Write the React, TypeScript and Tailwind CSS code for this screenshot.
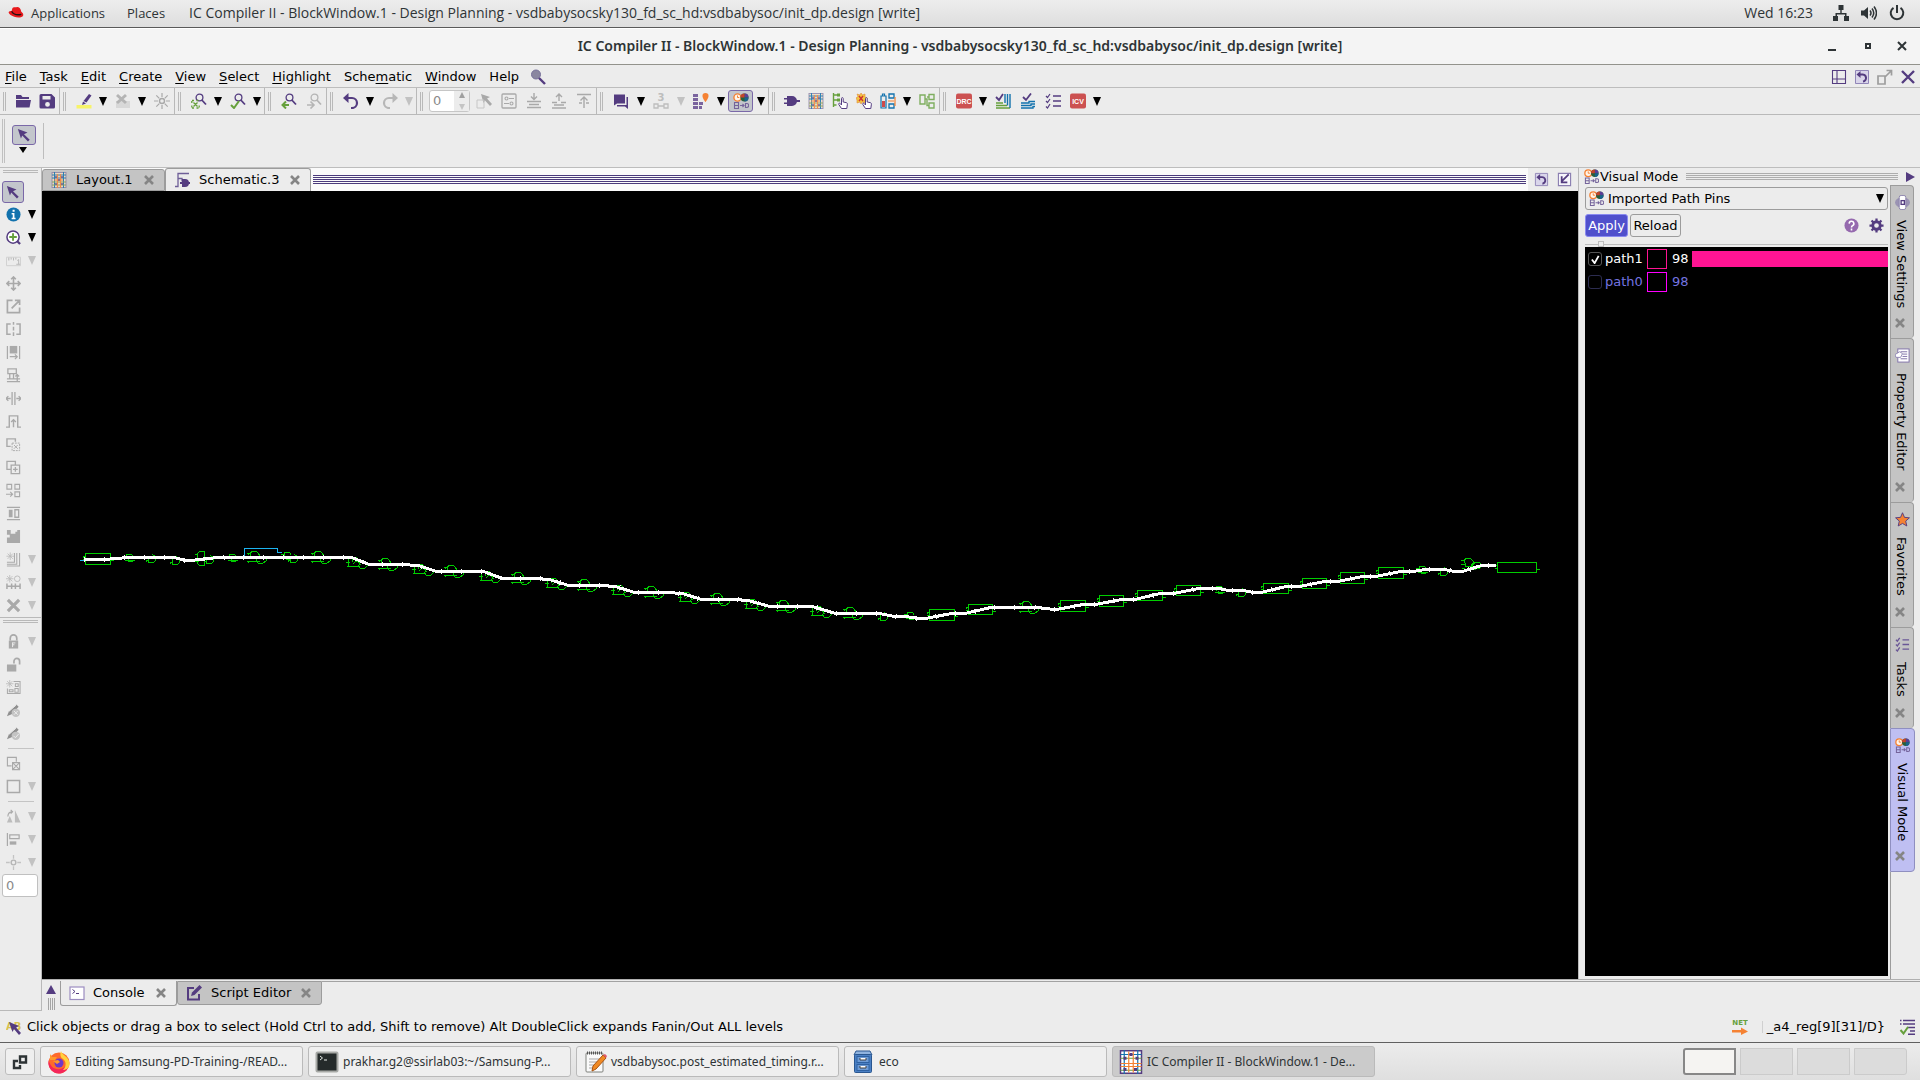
import React from 'react';

const P = '#543c80';
const G = '#a9a9a9';
const GREEN = '#66a03c';
const BLUE = '#1272ad';
const ORANGE = '#f58233';

const st = (color: string, w = 1.5) => ({ fill: 'none', stroke: color, strokeWidth: w });

const gridArt = (
  <g opacity="0.850">
    <rect x="1" y="0.500" width="14" height="15" fill="#f3dcc3" stroke="#8f87a8" />
    <path d="M1 3h14M1 6h14M3.500 0v16M12.500 0v16" {...st(BLUE, 1)} />
    <path d="M1 10h14M1 13h14" {...st('#7d9a50', 1)} />
    <path d="M6.500 2v14M9.500 2v14M3 8h9" {...st(ORANGE, 1.2)} />
    <path d="M4 4h2v2H4zM10 4h2v2h-2zM7 7h2v2H7zM4 11h2v2H4zM10 11h2v2h-2z" fill={P} opacity="0.700" />
  </g>
);

const visualArt = (
  <>
    <circle cx="4.500" cy="4.500" r="3.600" fill="#fff4e8" stroke={ORANGE} strokeWidth="1.400" />
    <path d="M4.500 2.500v2h1.800" {...st(ORANGE, 1)} />
    <circle cx="11.500" cy="4.500" r="4" fill="#27603c" />
    <path d="M11.500 4.500V.5a4 4 0 0 1 4 4z" fill="#5b3e96" />
    <path d="M11.500 4.500h-4a4 4 0 0 1 4-4z" fill="#c5432c" />
    <path d="M11.500 4.500h4a4 4 0 0 1-4 4z" fill="#18628e" />
    <path d="M1.500 9.500h4v6h-4zM1.500 12.500h4M7 12.500h4M9.500 11l1.500 1.500L9.500 14M12.500 10.500h1.200a2 2 0 0 1 0 4h-1.200z" {...st('#75649b', 1.1)} />
  </>
);

const lens = (c: string) => (
  <>
    <circle cx="8.500" cy="4.500" r="3.400" {...st(c, 1.3)} />
    <path d="M10.800 7L15 11.500" {...st(c, 1.8)} />
  </>
);

const spark = (cx: number, cy: number, c: string) => (
  <path
    d={`M${cx - 4} ${cy}h8M${cx} ${cy - 4}v8M${cx - 2.8} ${cy - 2.8}l5.600 5.600M${cx + 2.8} ${cy - 2.8}l-5.600 5.600`}
    {...st(c, 0.9)}
  />
);

const hand = (
  <path
    d="M9.500 15.500L6.800 11.500c-.6-1 .6-1.800 1.400-1L9.500 12V5.500c0-1.200 1.700-1.200 1.700 0V9l3 .6c.9.200 1.300.8 1.200 1.600l-.6 4.300z"
    fill="#fff"
    stroke={P}
  />
);

const ART: Record<string, React.ReactNode> = {
  folder: <path d="M1 2h5l1.500 2H14v2H1zM1 7h15l-1.500 7.500H1z" fill={P} />,
  save: (
    <path fillRule="evenodd" fill={P} d="M2 1h10.500L16 4.500V14a1.500 1.500 0 0 1-1.500 1.500H2A1.500 1.500 0 0 1 .5 14V2.500A1.500 1.500 0 0 1 2 1zM3.500 3v3.500h8V3zM8.500 9a2.400 2.400 0 1 0 0 4.800 2.400 2.400 0 0 0 0-4.800z" />
  ),
  marker: (
    <>
      <path d="M13 1l2.500 1.500-5 7L7.500 8z" fill={P} />
      <path d="M7 8.500l3 2L6 12z" fill={P} />
      <rect x="0.500" y="12" width="15" height="3.500" fill="#f7f36a" />
    </>
  ),
  clear: (
    <>
      <path d="M1 8h14v7H1z" fill="#d8d8d8" />
      <path d="M2 2l9 8M11 2l-9 8" {...st('#b4b4b4', 3)} />
    </>
  ),
  sun: (
    <>
      <circle cx="8" cy="8" r="2.500" {...st(G, 1.4)} />
      <path d="M8 0v4M8 12v4M0 8h4M12 8h4M2.300 2.300l3 3M10.700 10.700l3 3M2.300 13.700l3-3M10.700 5.300l3-3" {...st(G, 1.2)} />
    </>
  ),
  zoomSel: (
    <>
      {lens(P)}
      <path d="M1 7.500h2M5.500 7.500h2M1 15h2M5.500 15h2M.8 8v2M.8 12.500v2M8.200 12.500v2M2.500 9.500l4 4M6.500 9.500l-4 4" {...st(GREEN, 1.3)} />
    </>
  ),
  zoomCheck: (
    <>
      {lens(P)}
      <path d="M1 12l3 3 5-7" {...st(GREEN, 2)} />
    </>
  ),
  zoomBack: (
    <>
      {lens(P)}
      <path d="M8 12H2M5 8.500L1.500 12 5 15.500" {...st(GREEN, 2)} />
    </>
  ),
  zoomFwd: (
    <>
      {lens('#b5b5b5')}
      <path d="M1 12h6M4.500 8.500L8 12l-3.500 3.500" {...st('#b5b5b5', 1.6)} />
    </>
  ),
  undo: (
    <>
      <path d="M4 5h5a5 5 0 0 1 0 10H8" {...st(P, 2.2)} />
      <path d="M5.500 0v10L0 5z" fill={P} />
    </>
  ),
  redo: (
    <>
      <path d="M12 5H7a5 5 0 0 0 0 10h1" {...st('#b7b7b7', 2.2)} />
      <path d="M10.500 0v10L16 5z" fill="#b7b7b7" />
    </>
  ),
  pick: (
    <>
      <path d="M5 1l9 3-3 1.500 5 5.500-2 2-5-5.500L7.500 10z" fill={G} />
      <path d="M1 7h7v8H1z" {...st('#c6c6c6', 1)} />
    </>
  ),
  options: (
    <>
      <rect x="1" y="1" width="14" height="14" rx="1" {...st(G, 1.3)} />
      <circle cx="5.500" cy="5.500" r="1.500" {...st(G, 1.1)} />
      <circle cx="10.500" cy="10.500" r="1.500" {...st(G, 1.1)} />
      <path d="M8 5.500h5M3 10.500h5" {...st(G, 1.2)} />
    </>
  ),
  down: <path d="M8 0v6M5 3.500L8 6.500l3-3M1 8.500h14M3 11.500h10M1 14.500h14" {...st(G, 1.4)} />,
  up: <path d="M8 8V1M5 4L8 1l3 3M1 9.500h5M10 9.500h5M3 12h10M1 15h14" {...st(G, 1.4)} />,
  top: <path d="M8 15V4M4.500 7.500L8 4l3.500 3.500M1 1.500h14M3 10h3M10 10h3" {...st(G, 1.4)} />,
  chat: <path d="M1 1.500h11v9H4L1 12.500zM13.500 4H15v12l-3-2.500H4V12h9.500z" fill={P} />,
  three: (
    <>
      <text x="4.500" y="8" fontSize="10" fontFamily="DejaVu Sans" fontWeight="bold" fill="#bdbdbd">3</text>
      <path d="M1 11h4v4H1zM11 11h4v4h-4zM5 13h6" {...st('#bdbdbd', 1.3)} />
    </>
  ),
  stack: (
    <>
      <path d="M0 1h5v3H0zM0 5h5v3H0zM0 9h5v3H0zM0 13h5v3H0zM6 9h4v3H6zM6 13h3v3H6z" fill="#7a649e" />
      <path d="M12.500 0a3 3 0 0 1 3 3.200c0 2-3 5.800-3 5.800s-3-3.800-3-5.800a3 3 0 0 1 3-3.200z" fill={ORANGE} />
    </>
  ),
  visual: visualArt,
  plug: <path d="M3 3h5a5 5 0 0 1 0 10H3v-2H0V9.500h3v-3H0V5h3zM12 7h4v2h-4z" fill={P} />,
  layout: gridArt,
  handTree: (
    <>
      <path d="M1.500 0v14M1.500 2h4M1.500 7h4M1.500 12h3" {...st(GREEN, 1.4)} />
      <path d="M5 .5h3v3H5zM5 5.500h3v3H5z" fill={GREEN} />
      {hand}
    </>
  ),
  handStar: (
    <>
      <path d="M5 0l1.500 2L9 1v3l2.500 1.500L9 7v3l-2.500-1L5 11 4 9 1 10V7L0 5l2-1.500L1 1l3 1z" fill="#f3c63e" stroke="#e0893c" strokeWidth="0.600" />
      <path d="M3 3l4 5M7 3L3 8" {...st('#cc3333', 1.4)} />
      {hand}
    </>
  ),
  battery: (
    <>
      <path d="M1 3h5v12H1zM2.500 1h2v2h-2z" {...st(BLUE, 1.2)} />
      <path d="M2 8h3v6H2z" fill="#cf4b4b" />
      <path d="M9 1h5v4H9zM9 11h5v4H9z" {...st(BLUE, 1.3)} />
      <path d="M15 4v9M8 8h6" {...st(ORANGE, 1.2)} />
    </>
  ),
  hier: <path d="M1 2h5v9H1zM10 1.500h5v5h-5zM10 10h5v5h-5zM6 6h2v6.500h2M8 4h2" {...st('#7fae60', 1.4)} />,
  drc: (
    <>
      <rect x="0" y="0.500" width="16" height="15" rx="2" fill="#cc5151" />
      <text x="8" y="11" textAnchor="middle" fontSize="7" fontFamily="Liberation Sans" fontWeight="bold" fill="#fff">DRC</text>
    </>
  ),
  icv: (
    <>
      <rect x="0" y="0.500" width="16" height="15" rx="2" fill="#cc5151" />
      <text x="8" y="11" textAnchor="middle" fontSize="7" fontFamily="Liberation Sans" fontWeight="bold" fill="#fff">ICV</text>
    </>
  ),
  verify: (
    <>
      <path d="M1 10h7M1 12.500h11M1 15h14" {...st(GREEN, 1.4)} />
      <path d="M10 1v9M12.500 1v11.500M15 1v14" {...st(BLUE, 1.4)} />
      <path d="M1 4l3 3 4-6" {...st(P, 1.8)} />
    </>
  ),
  verify2: (
    <>
      <path d="M1 10h8V8.500h6M1 12.500h10V11h4M1 15h12v-1.500h2" {...st(BLUE, 1.4)} />
      <path d="M3 4l3 3 5-6.500" {...st(P, 1.8)} />
    </>
  ),
  checks: (
    <>
      <path d="M1 3l1.500 1.500L5 1M1 8l1.500 1.500L5 6M1 13.500L2.500 15 5 11" {...st(P, 1.2)} />
      <path d="M8 3h8M8 8h8M8 13h8" {...st(P, 1.6)} />
    </>
  ),
  arrow: <path d="M1 1l11 4-4 2 6.500 6.500-2 2L6 8.500 4.500 12z" fill={P} />,
  info: (
    <>
      <circle cx="8" cy="8" r="7.500" fill={BLUE} />
      <path d="M7 2.800h2.200V5H7zM6 6.500h3v5h1.200V13H6v-1.500h1.200V8H6z" fill="#fff" />
    </>
  ),
  zoomIn: (
    <>
      <circle cx="7.500" cy="7.500" r="6.500" fill="#fff" stroke={P} strokeWidth="1.600" />
      <path d="M7.500 3.500v8M3.500 7.500h8" {...st(GREEN, 2)} />
      <path d="M12 12l3 3" {...st(P, 2.4)} />
    </>
  ),
  ruler: (
    <>
      <path d="M.5 4.500h15v9H.5z" {...st('#cfcfcf', 1)} />
      <path d="M3 5v3M5.500 5v2M8 5v3M10.500 5v2M12 8l1.500-1v5M11 12h4" {...st('#b5b5b5', 1)} />
    </>
  ),
  move: <path d="M8 1v14M1 8h14M5.500 3.500L8 1l2.500 2.500M5.500 12.500L8 15l2.500-2.500M3.500 5.500L1 8l2.500 2.500M12.500 5.500L15 8l-2.500 2.500" {...st(G, 1.7)} />,
  popout: <path d="M7 1.500H1.500v13h13V9M6 10l8-8M9.500 1.500h5v5" {...st(G, 1.8)} />,
  split: <path d="M5 2H1v11h4M11 2h4v11h-4M8 0v3M8 5v4M8 11v4" {...st(G, 1.6)} />,
  toRight: (
    <>
      <path d="M1.500 1v14M14.500 1v14M4 12.500h8M9.500 10l2.500 2.500L9.500 15" {...st(G, 1.3)} />
      <path d="M4 1h8v8H4z" fill={G} />
    </>
  ),
  wires: <path d="M2 1h9v5H2zM4 6v6M8 6v6M1 11.500h14M1 14.500h14M12 14V7M10 9l2-2 2 2" {...st(G, 1.4)} />,
  spread: <path d="M6.500 1v14M9.500 1v14M0 8h5M11 8h5M2.500 5.500L0 8l2.500 2.500M13.500 5.500L16 8l-2.500 2.500" {...st(G, 1.4)} />,
  pulse: <path d="M0 14h3.500V2h9v12H16M8 14V6M5.500 8.500L8 6l2.500 2.500" {...st(G, 1.5)} />,
  group: (
    <>
      <path d="M5 10H1V2h9v3" {...st(G, 1.5)} />
      <path d="M6.500 6.500h8v8h-8z" {...st(G, 1)} strokeDasharray="2 1" />
      <path d="M8.500 8.500l4 4M12.500 8.500l-4 4" {...st(G, 1)} />
    </>
  ),
  copy: <path d="M5 10H1V1.500h9V5M5.500 5.500h9v9h-9zM10 7.500v5M7.500 10h5" {...st(G, 1.4)} />,
  boxes: <path d="M1 1.500h5v5H1zM9.500 1.500h5v5h-5zM9.500 9.500h5v5h-5zM0 12h7M4.500 9.500L7 12l-2.500 2.500" {...st(G, 1.2)} />,
  align: (
    <>
      <path d="M1 1.500h14M1 14.500h14M9.500 4h4v8h-4z" {...st(G, 1.4)} />
      <path d="M3 4h4v8H3z" fill={G} />
    </>
  ),
  blocks: <path d="M1 1h4v4h5V3h2V1h3v14H1V9h3V6H1z" fill={G} />,
  layers: (
    <>
      {spark(4.5, 4.5, '#bbb')}
      <path d="M1 11h8V1M1 13h10.500V1M1 15h13.500V1" {...st(G, 1.1)} />
    </>
  ),
  rails: (
    <>
      {spark(4, 4, '#bbb')}
      <path d="M1 9v6M6 9v6M10 9v6M15 9v6M1 12h14" {...st(G, 1.6)} />
      <circle cx="12" cy="4" r="3" {...st('#bbb', 1)} />
    </>
  ),
  cross: <path d="M2 2l12 12M14 2L2 14" {...st(G, 3.4)} />,
  lock: (
    <>
      <path d="M4.500 7V4.500a3.500 3.500 0 0 1 7 0V7" {...st(G, 1.8)} />
      <path d="M3 7h10v8.500H3z" fill={G} />
      <path d="M7 9v5M7 9.500h3M7 11.500h2" {...st('#eee', 1)} />
    </>
  ),
  unlock: (
    <>
      <path d="M8.500 7V4.500a3 3 0 0 1 6 0V8" {...st(G, 1.8)} />
      <path d="M1 8h10v7.500H1z" fill={G} />
    </>
  ),
  place: (
    <>
      <path d="M8 1.500h7v13H1.500V9M3.500 10.500h4v2h-4zM9.500 9h3.500v4H9.500zM10 4h3v3h-3z" {...st(G, 1.1)} />
      {spark(4, 4, '#bbb')}
    </>
  ),
  penX: (
    <>
      <path d="M1 14l2-5 8-7.500 2.500 2.500L6 12z" fill="#8f8f8f" />
      <circle cx="10.500" cy="10.500" r="4.500" fill="#c3c3c3" />
      <path d="M8.500 8.500l4 4M12.500 8.500l-4 4M3 9l8-7" {...st('#eee', 1)} />
    </>
  ),
  penCheck: (
    <>
      <path d="M1 14l2-5 8-7.500 2.500 2.500L6 12z" fill="#8f8f8f" />
      <circle cx="10.500" cy="10.500" r="4.500" fill="#c3c3c3" />
      <path d="M8 10.500l2 2 3.500-4M3 9l8-7" {...st('#eee', 1)} />
    </>
  ),
  boxX: <path d="M6 10.500H1.500v-9H11V6M7 7h7.500v7.500H7zM7 7l7.500 7.500M14.500 7L7 14.500" {...st(G, 1.2)} />,
  square: <path d="M1.500 1.500h13v13h-13z" {...st(G, 1.6)} />,
  rotate: (
    <>
      <path d="M9.500 1l6 13.500h-6zM1 14.500l3-7 3 7z" fill="#bcbcbc" />
      <path d="M2 8c0-4 2-5 5-5M5 1l2 2-2 2" {...st(G, 1.2)} />
    </>
  ),
  alignLeft: (
    <>
      <path d="M1.500 1v14M4 3h10v4H4z" {...st(G, 1.3)} />
      <path d="M4 10h7v3.500H4z" fill={G} />
    </>
  ),
  target: (
    <>
      <circle cx="8" cy="8" r="2.500" {...st('#b5b5b5', 1.5)} />
      <path d="M8 0v4M8 12v4M0 8h4M12 8h4" {...st('#c3c3c3', 1.4)} />
    </>
  ),
  search: (
    <>
      <circle cx="6" cy="5.500" r="4.500" fill="#8a86a0" stroke="#77719a" />
      <path d="M9 9l6 6" {...st(P, 2.4)} />
    </>
  ),
  table: <path d="M1.500 1.500h13v13h-13zM1.500 10h13M6 1.500v13" {...st(P, 1.1)} />,
  restore: (
    <>
      <path d="M1.500 1.500h13v13h-13z" fill="#d9d5ea" stroke="#9186b8" />
      <path d="M5 5.500h3a3.500 3.500 0 0 1 1 7" {...st(P, 2)} />
      <path d="M6.500 2v7L2.500 5.500z" fill={P} />
    </>
  ),
  eject: <path d="M1 7h7v8H1zM8 8l6-6M9.500 1.500h5v5" {...st('#9d9d9d', 1.7)} />,
  close: <path d="M2 2l12 12M14 2L2 14" {...st(P, 2.4)} />,
  dockIn: (
    <>
      <path d="M1.500 1.500h13v13h-13z" fill="#f6f5fb" stroke="#8a7eb0" strokeWidth="1.200" />
      <path d="M12.500 2.500l-7 7M5 4.500V11h6" {...st(P, 1.9)} />
    </>
  ),
  schem: (
    <>
      <path d="M1 14.500h3V1.500h11M4 6.500h4v3" {...st('#6f5f98', 1.3)} />
      <path d="M8 7h3a4 4 0 0 1 0 8H8zM6 10h2v2H6zM14 10h2v2h-2z" fill={P} />
    </>
  ),
  console: (
    <>
      <rect x="1" y="2" width="14" height="12.500" fill="#fff" stroke="#9c8dc0" strokeWidth="1.200" />
      <path d="M3.500 4.500l2.500 2-2.500 2M7 8.500h3" {...st(P, 1)} />
    </>
  ),
  edit: (
    <>
      <path d="M8 3H2v11.500h11V9" {...st(P, 2)} />
      <path d="M13.500 0L16 2.500 8.500 10l-3.500 1L6 7.500z" fill={P} />
    </>
  ),
  help: (
    <>
      <circle cx="8" cy="8" r="7.500" fill="#9569ae" />
      <path d="M5.500 6a2.500 2.500 0 1 1 3.500 2.300c-.8.400-1 .8-1 1.700M8 11.300v2" {...st('#fff', 1.7)} />
    </>
  ),
  gear: (
    <>
      <circle cx="8" cy="8" r="4" {...st(P, 3)} />
      <path d="M8 .5v3M8 12.500v3M.5 8h3M12.500 8h3M2.700 2.700l2 2M11.300 11.300l2 2M2.700 13.300l2-2M11.300 4.700l2-2" {...st(P, 2.4)} />
    </>
  ),
  eye: (
    <>
      <ellipse cx="8" cy="8" rx="8" ry="5.500" fill="#9a93b3" />
      <rect x="4.500" y="0.500" width="7" height="15" rx="2" fill="#fff" stroke="#8b82ac" />
      <rect x="6.500" y="6" width="3.500" height="4" fill="#fff" stroke={P} strokeWidth="1.400" />
    </>
  ),
  property: (
    <>
      <rect x="3" y="1" width="12" height="14" fill="#fff" stroke="#7e70a8" />
      <path d="M6 4h7M8 6.500h5M8 9h5M6 11.500h7" {...st('#7e70a8', 1)} />
      <path d="M0 7l5-3 3 2-2 4H1z" fill="#fff" stroke="#8f85b3" />
    </>
  ),
  star: <path d="M8 .8l2.100 4.900 5.300.5-4 3.500 1.200 5.200L8 12.200l-4.600 2.700 1.200-5.200-4-3.500 5.300-.5z" fill={ORANGE} stroke={P} />,
  tasks: (
    <path d="M1 3l1.500 1.500L5 1M1 8l1.500 1.500L5 6M1 13.500L2.500 15 5 11M8 3h7M8 8h7M8 13h7" {...st('#6a5796', 1.4)} />
  ),
  status: (
    <>
      <text x="0" y="11" fontSize="10" fontFamily="DejaVu Sans" fontWeight="bold" fill="#d9c24c">AB</text>
      <path d="M3 3l10 4-3 1.500L15 14l-2 2-5-6-1.500 3z" fill={P} />
    </>
  ),
  net: (
    <>
      <text x="8" y="6" textAnchor="middle" fontSize="7" fontFamily="DejaVu Sans" fontWeight="bold" fill={GREEN}>NET</text>
      <path d="M0 11h9V8.500l7 4-7 3.500v-2.500H0z" fill={ORANGE} />
    </>
  ),
  queue: (
    <>
      <path d="M1 1.500h1.500M4 1.500h12M1 5h1.500M4 5h12M8 8.500h8M11 12h5M9 15.300h7" {...st(P, 1.4)} />
      <path d="M1.500 11l3 3.500L9 8" {...st(GREEN, 2)} />
    </>
  ),
  hat: (
    <>
      <path d="M4.500 3c1-1.500 3-.5 4-.8 2-.5 4 .8 4.800 4.500C15 8 15.500 9 15.200 10.500c-1 2.500-6 2.500-9 1.300C3 10.500.8 9 .6 7.500.6 6.300 2.500 6 3.600 6z" fill="#e8191c" />
      <path d="M3.600 6.300c2 3 6 4 9.700 3" {...st('#241010', 1.3)} />
    </>
  ),
  network: <path d="M5.500 0h5v5H8.700v3h4.800v3H16v5h-5v-5h1V9.500H4V11h1v5H0v-5h2.500V8h4.800V5H5.500z" fill="#2e3436" />,
  volume: (
    <>
      <path d="M0 5.500h3L7 2v12l-4-3.500H0z" fill="#2e3436" />
      <path d="M9 5.500q2 2.500 0 5M11 3.500q3.500 4.500 0 9M13 1.500q5 6.500 0 13" {...st('#2e3436', 1.5)} />
    </>
  ),
  power: <path d="M4.500 2.800a6.300 6.300 0 1 0 7 0M8 0v8" {...st('#2e3436', 2)} />,
};

function Icon({ n, className = 'size-4' }: { n: string; className?: string }) {
  return (
    <svg viewBox="0 0 16 16" className={`shrink-0 ${className}`} aria-hidden="true">
      {ART[n]}
    </svg>
  );
}

function Tri({ dim = false }: { dim?: boolean }) {
  return (
    <svg viewBox="0 0 8 9" className="h-[9px] w-2 shrink-0" aria-hidden="true">
      <path d="M0 0h8L4 9z" fill={dim ? '#c2c2c2' : '#000'} />
    </svg>
  );
}

const Tool = ({ n, narrow = false, on = false }: { n: string; narrow?: boolean; on?: boolean }) => (
  <button
    aria-label={n}
    className={`flex h-[22px] shrink-0 items-center justify-center rounded-[3px] ${narrow ? 'w-6' : 'w-[25px]'} ${on ? 'border border-[#7a68a8] bg-[#c3c6cc]' : ''}`}
  >
    <Icon n={n} />
  </button>
);

const Drop = ({ dim = false, wide = false }: { dim?: boolean; wide?: boolean }) => (
  <button aria-label="More" className={`flex h-[22px] shrink-0 items-center justify-center ${wide ? 'w-[15px]' : 'w-[14px]'}`}>
    <Tri dim={dim} />
  </button>
);

function Group({ children, last = false }: { children: React.ReactNode; last?: boolean }) {
  return (
    <div className={`flex items-center ${last ? '' : 'border-r border-[#b9b9b9]'}`}>
      <span className="mr-[5px] ml-[3px] h-[19px] w-[3px] border-x border-[#b9b9b9]" />
      {children}
    </div>
  );
}

const MENUS: [string, string, string][] = [
  ['', 'F', 'ile'], ['', 'T', 'ask'], ['', 'E', 'dit'], ['', 'C', 'reate'], ['', 'V', 'iew'], ['', 'S', 'elect'],
  ['', 'H', 'ighlight'], ['Sche', 'm', 'atic'], ['', 'W', 'indow'], ['Help', '', ''],
];

type Row = { n: string; drop?: 'on' | 'dim'; on?: boolean };
const SIDE: (Row | 'rule' | 'grip')[] = [
  { n: 'arrow', on: true }, { n: 'info', drop: 'on' }, { n: 'zoomIn', drop: 'on' }, { n: 'ruler', drop: 'dim' },
  { n: 'move' }, { n: 'popout' }, { n: 'split' }, { n: 'toRight' }, { n: 'wires' }, { n: 'spread' }, { n: 'pulse' },
  { n: 'group' }, { n: 'copy' }, { n: 'boxes' }, { n: 'align' }, { n: 'blocks' }, { n: 'layers', drop: 'dim' },
  { n: 'rails', drop: 'dim' }, { n: 'cross', drop: 'dim' }, 'grip', { n: 'lock', drop: 'dim' }, { n: 'unlock' },
  { n: 'place' }, { n: 'penX' }, { n: 'penCheck' }, 'rule', { n: 'boxX' }, { n: 'square', drop: 'dim' }, 'rule',
  { n: 'rotate', drop: 'dim' }, { n: 'alignLeft', drop: 'dim' }, { n: 'target', drop: 'dim' },
];

const TITLE = 'IC Compiler II - BlockWindow.1 - Design Planning - vsdbabysocsky130_fd_sc_hd:vsdbabysoc/init_dp.design [write]';

const ROUTE =
  '84,560 97,559 110,559 135,557 157,557 176,558 184,560 195,560 213,558 237,557 268,557 277,558 298,557 334,557 353,558 368,564 400,564 420,566 435,571 467,571 485,572 501,578 534,578 551,580 567,585 600,585 617,587 633,592 666,592 684,594 700,599 733,599 750,601 768,606 800,606 814,607 834,613 865,613 882,614 892,616 909,617 916,618 928,618 954,613 967,613 993,607 1033,607 1050,609 1059,609 1086,604 1098,604 1124,599 1137,599 1162,593 1176,593 1201,588 1217,588 1226,590 1241,590 1251,592 1263,592 1288,586 1302,586 1327,581 1340,581 1365,576 1378,576 1403,571 1416,571 1428,569 1442,569 1452,571 1464,571 1483,565 1496,565';

const CELLS = [
  [85, 553, 25, 11], [929, 609, 25, 11], [968, 604, 24, 10], [1060, 600, 25, 11], [1099, 595, 24, 11], [1137, 590, 25, 10],
  [1176, 585, 24, 10], [1263, 583, 25, 10], [1302, 578, 24, 10], [1340, 572, 24, 11], [1378, 567, 25, 11], [1497, 562, 39, 10],
];
const TALL = [[248, 557], [312, 557], [379, 564], [445, 571], [512, 578], [578, 585], [645, 592], [711, 599], [777, 606], [844, 613], [1020, 607]];
const LOW = [[346, 560], [412, 567], [479, 574], [545, 581], [611, 588], [678, 595], [744, 602], [810, 609]];
const BUMPS = [[124, 558], [227, 558], [282, 556], [905, 616], [1214, 590], [1417, 570]];
const CUPS = [[148, 557], [172, 559], [206, 558], [290, 557], [880, 615], [1238, 591], [1440, 570]];

function Schematic() {
  return (
    <svg viewBox="42 191 1536 788" className="size-full" shapeRendering="crispEdges" role="img" aria-label="Schematic path">
      <g fill="none" stroke="#00cd00" strokeWidth="1" transform="translate(.5 .5)">
        {CELLS.map(([x, y, w, h]) => (
          <path key={x} d={`M${x} ${y}h${w}v${h}h${-w}zM${x - 3} ${y + 3}h3M${x - 3} ${y + 6}h3M${x - 2} ${y + 2}v2M${x + w} ${y + 7}h3`} />
        ))}
        {TALL.map(([x, y]) => (
          <path key={x} d={`M${x - 2} ${y - 4}h4M${x + 2} ${y}v-5l2-1h4l2 2l2 4M${x - 2} ${y + 4}h13M${x + 8} ${y}v3l2 3h4l4-3v-4M${x} ${y - 5}v2M${x} ${y + 3}v2`} />
        ))}
        {LOW.map(([x, y]) => (
          <path key={x} d={`M${x - 1} ${y + 2}h4M${x} ${y + 6}h13M${x + 2} ${y + 5}v-7l3-1h5l2 3M${x + 6} ${y + 4}l3-3h3l2 4M${x + 12} ${y + 5}l2 3h4l3-3v-3M${x + 6} ${y - 3}v4`} />
        ))}
        {BUMPS.map(([x, y]) => (
          <path key={x} d={`M${x - 2} ${y - 2}h3M${x} ${y + 2}h9M${x + 2} ${y}v-4h5l2 3M${x + 4} ${y}v3h4l3-2`} />
        ))}
        {CUPS.map(([x, y]) => (
          <path key={x} d={`M${x - 3} ${y + 3}h3M${x} ${y - 2}v7h5l2-2v-4l-3-2M${x - 2} ${y + 2}v2`} />
        ))}
        <path d="M197 562v-9l2-2h5v14h-5l-2-2M194 561h4M194 554h3" />
        <path d="M1464 559l2-1h4l3 3v3l-3 2h-5zM1465 566h10l6-2M1464 570h6l3-2M1460 560h4M1460 564h4M1461 568h3M1471 564l4-2h4l3 3-3 3-6 1M80 560h4" />
      </g>
      <path d="M244.500 557v-9h33v4h4M80 560.500h4" fill="none" stroke="#1cb4f0" />
      <polyline points={ROUTE} fill="none" stroke="#fff" strokeWidth="3" />
      <polyline points={ROUTE} fill="none" stroke="#fff" strokeWidth="5" strokeDasharray="1 19" />
    </svg>
  );
}

const X = ({ label }: { label: string }) => (
  <button aria-label={`Close ${label}`} className="flex shrink-0 items-center justify-center">
    <svg viewBox="0 0 10 10" className="size-[10px]" aria-hidden="true">
      <path d="M1 1l8 8M9 1L1 9" stroke="#858585" strokeWidth="2.600" />
    </svg>
  </button>
);

const SIDE_TABS = [
  { n: 'eye', t: 'View Settings', h: 'h-[153px]' },
  { n: 'property', t: 'Property Editor', h: 'h-[164px]' },
  { n: 'star', t: 'Favorites', h: 'h-[125px]' },
  { n: 'tasks', t: 'Tasks', h: 'h-[101px]' },
  { n: 'visual', t: 'Visual Mode', h: 'h-[144px]' },
];

const fox = (
  <svg viewBox="0 0 24 24" className="size-6 shrink-0" aria-hidden="true">
    <circle cx="12" cy="13" r="10.500" fill="#ff6a2b" />
    <path d="M12 23.500A10.500 10.500 0 0 1 1.800 10C3 17 8 20 13 19s7-4 8-7c2 6-3 11.500-9 11.500z" fill="#f5265b" />
    <path d="M14 1c1 4 8 6 8.500 12S18 20 16 20c4-4 3-9 0-11-3-1.500-3-5-2-8z" fill="#ffd23d" />
    <path d="M3 4l2 3h5l-2 3H3z" fill="#ff9a28" />
    <circle cx="12" cy="13" r="4.500" fill="#6f39c9" />
    <path d="M6 11l5-1 2 2-3 2z" fill="#ff9a28" />
  </svg>
);
const term = (
  <svg viewBox="0 0 24 24" className="size-6 shrink-0" aria-hidden="true">
    <rect x="1.500" y="2.500" width="21" height="19" rx="1" fill="#252b2b" stroke="#a7a9a6" strokeWidth="2" />
    <path d="M5 6l2.500 2L5 10M9 10h3" fill="none" stroke="#e8ece8" />
  </svg>
);
const note = (
  <svg viewBox="0 0 24 24" className="size-6 shrink-0" aria-hidden="true">
    <rect x="3" y="3" width="17" height="19" rx="1" fill="#fafafa" stroke="#7f817d" />
    <path d="M4 3h15" stroke="#555" strokeWidth="3" strokeDasharray="1 1" />
    <path d="M6 9h11M6 12h9M6 15h7M6 18h5" stroke="#a7a7a7" />
    <path d="M20 5l3 3-10 11-4 2 1-5z" fill="#f08a24" stroke="#a95412" />
    <path d="M20 5l3 3 1-2-2-2z" fill="#e05a6a" />
  </svg>
);
const cabinet = (
  <svg viewBox="0 0 24 24" className="size-6 shrink-0" aria-hidden="true">
    <path d="M5 1h14l2 4H3z" fill="#8fb3df" stroke="#2a5790" />
    <rect x="3.500" y="4.500" width="17" height="18" rx="1" fill="#4b80c4" stroke="#2a5790" />
    <rect x="6" y="6.500" width="12" height="6" fill="#6d9bd6" stroke="#2f62a2" />
    <rect x="6" y="14.500" width="12" height="6" fill="#6d9bd6" stroke="#2f62a2" />
    <path d="M9 8v2h6V8M9 16v2h6v-2" fill="#fff" stroke="#444" />
  </svg>
);
const chip = (
  <svg viewBox="0 0 16 16" className="size-6 shrink-0" aria-hidden="true">
    <rect x="1" y="0.500" width="14" height="15" fill="#fff" stroke={P} />
    <path d="M1 3h14M3.500 0v16M12.500 0v16" {...st(BLUE, 0.8)} />
    <path d="M1 5.500h14M1 13.500h14" {...st(GREEN, 0.8)} />
    <path d="M6.500 1v14M9.500 1v14M1 9h14M1 11h14" {...st(ORANGE, 0.8)} />
    <path d="M3 4.500h2v2H3zM7 2h2v2H7zM11 4.500h2v2h-2zM3 12h2v2H3zM10 12h2v2h-2z" fill={P} />
  </svg>
);

const TASKS = [
  { i: fox, t: 'Editing Samsung-PD-Training-/READ...', on: false },
  { i: term, t: 'prakhar.g2@ssirlab03:~/Samsung-P...', on: false },
  { i: note, t: 'vsdbabysoc.post_estimated_timing.r...', on: false },
  { i: cabinet, t: 'eco', on: false },
  { i: chip, t: 'IC Compiler II - BlockWindow.1 - De...', on: true },
];

export default function App() {
  return (
    <div className="flex h-screen w-full flex-col overflow-hidden bg-[#ececec] font-['DejaVu_Sans',sans-serif] text-[13px] leading-4 text-black">
      <header className="flex h-7 shrink-0 items-center border-b border-[#5a5a5a] bg-gradient-to-b from-[#ededed] to-[#dedede] px-2 pb-0.5 font-['Open_Sans',sans-serif] text-sm leading-4 text-[#2e3436]">
        <Icon n="hat" />
        <button className="ml-[7px] text-[13px]">Applications</button>
        <button className="ml-[22px] text-[13px]">Places</button>
        <button className="ml-6">{TITLE}</button>
        <span className="ml-auto">Wed 16:23</span>
        <div className="ml-5 flex items-center gap-3 pr-[7px]">
          <Icon n="network" />
          <Icon n="volume" />
          <Icon n="power" />
        </div>
      </header>

      <div className="grid h-[37px] shrink-0 grid-cols-[1fr_auto_1fr] items-center border-t border-b border-t-white border-b-[#93938c] bg-[#f4f4f4] pb-0.5 font-['Noto_Sans',sans-serif] text-sm leading-4 font-semibold text-[#2e3436]">
        <span />
        <h1>{TITLE}</h1>
        <div className="flex items-center justify-end gap-6 pr-[13px]">
          <button aria-label="Minimize" className="flex h-[10px] w-[13px] items-end"><span className="h-0.5 w-2 bg-[#2e3436]" /></button>
          <button aria-label="Maximize" className="mr-0.5 size-[6px] border-2 border-[#2e3436]" />
          <button aria-label="Close window">
            <svg viewBox="0 0 10 10" className="size-[10px]"><path d="M1 1l8 8M9 1L1 9" stroke="#2e3436" strokeWidth="2" /></svg>
          </button>
        </div>
      </div>

      <nav className="flex h-[23px] shrink-0 items-center gap-[13px] border-b border-[#bdbdbd] pt-px pr-1 pl-[5px]">
        {MENUS.map(([a, u, b]) => (
          <button key={a + u + b}>
            {a}
            <span className="underline underline-offset-2">{u}</span>
            {b}
          </button>
        ))}
        <Icon n="search" className="-ml-0.5 size-4" />
        <div className="ml-auto flex items-center gap-[7px]">
          <Icon n="table" /><Icon n="restore" /><Icon n="eject" /><Icon n="close" />
        </div>
      </nav>

      <div className="flex h-[27px] shrink-0 border-b border-[#b9b9b9]">
        <Group><Tool n="folder" narrow /><Tool n="save" narrow /></Group>
        <Group><Tool n="marker" /><Drop /><Tool n="clear" /><Drop /><Tool n="sun" /></Group>
        <Group><Tool n="zoomSel" /><Drop /><Tool n="zoomCheck" /><Drop /></Group>
        <Group><Tool n="zoomBack" /><Tool n="zoomFwd" /></Group>
        <Group><Tool n="undo" /><Drop /><Tool n="redo" /><Drop dim /></Group>
        <Group>
          <div className="mr-px ml-px flex h-[22px] w-[41px] items-center rounded-[3px] border border-[#c6c6c6] bg-white">
            <input aria-label="Level" defaultValue="0" className="w-6 min-w-0 pl-[3px] text-[#8a8a8a] outline-none" />
            <span className="flex h-full flex-1 flex-col items-center justify-center gap-1.5 bg-[#ececec]">
              <svg viewBox="0 0 6 6" className="size-[6px]"><path d="M3 0l3 6H0z" fill="#a0a0a0" /></svg>
              <svg viewBox="0 0 6 6" className="size-[6px]"><path d="M0 0h6L3 6z" fill="#c4c4c4" /></svg>
            </span>
          </div>
          <Tool n="pick" /><Tool n="options" /><Tool n="down" /><Tool n="up" /><Tool n="top" />
        </Group>
        <Group><Tool n="chat" /><Drop wide /><Tool n="three" /><Drop dim wide /><Tool n="stack" /><Drop wide /><Tool n="visual" on /><Drop wide /></Group>
        <Group><Tool n="plug" narrow /><Tool n="layout" narrow /><Tool n="handTree" narrow /><Tool n="handStar" narrow /><Tool n="battery" narrow /><Drop /><Tool n="hier" /></Group>
        <Group last><Tool n="drc" /><Drop /><Tool n="verify" /><Tool n="verify2" /><Tool n="checks" /><Tool n="icv" /><Drop /></Group>
      </div>

      <div className="flex h-[53px] shrink-0 border-b border-[#bdbdbd] pl-[2px]">
        <span className="mt-1 h-[44px] w-[3px] border-x border-[#c0c0c0]" />
        <div className="mt-2 ml-[7px] flex h-9 w-[32px] flex-col items-start border-r border-[#bdbdbd]">
          <button aria-label="Select tool" className="mt-0.5 flex h-5 w-6 shrink-0 items-center justify-center rounded-[3px] border border-[#7a68a8] bg-[#c3c6cc]">
            <Icon n="arrow" className="size-[14px]" />
          </button>
          <button aria-label="Select modes" className="mt-0.5 ml-[7px] flex">
            <svg viewBox="0 0 8 6" className="h-[6px] w-2"><path d="M0 0h8L4 6z" /></svg>
          </button>
        </div>
      </div>

      <main className="flex min-h-0 flex-1">
        <aside className="flex w-[42px] shrink-0 flex-col border-r border-b border-[#b9b9b9] pt-[2px]">
          <span className="mr-[3px] mb-[7px] ml-[3px] h-[3px] shrink-0 border-y border-[#b9b9b9]" />
          {SIDE.map((r, i) =>
            r === 'rule' ? (
              <span key={i} className="my-[3px] mr-[7px] ml-2 h-px shrink-0 bg-[#c4c4c4]" />
            ) : r === 'grip' ? (
              <div key={i} className="h-[13px] shrink-0 border-t border-[#b9b9b9] px-[3px] pt-[2px]">
                <span className="block h-[3px] border-y border-[#b9b9b9]" />
              </div>
            ) : (
              <div key={i} className="flex h-[23px] shrink-0 items-center">
                <button aria-label={r.n} className={`ml-0.5 flex size-[22px] items-center justify-center rounded-[3px] ${r.on ? 'border border-[#7a68a8] bg-[#c3c6cc]' : ''}`}>
                  <Icon n={r.n} className={r.on ? 'size-[14px]' : 'size-[15px]'} />
                </button>
                {r.drop && <button aria-label="More" className="ml-1"><Tri dim={r.drop === 'dim'} /></button>}
              </div>
            ),
          )}
          <input aria-label="Value" defaultValue="0" className="ml-[2px] h-[23px] w-9 shrink-0 rounded-[3px] border border-[#c0c0c0] bg-white pl-[3px] text-[#8a8a8a]" />
        </aside>

        <div className="flex min-w-0 flex-1 flex-col">
          <div className="flex min-h-0 flex-1">
            <section className="flex min-w-0 flex-1 flex-col">
              <div className="flex h-[23px] shrink-0 items-end bg-[#fafafa]">
                <div className="flex h-[22px] w-[123px] shrink-0 items-center rounded-t-[3px] border border-[#9c9c9c] bg-[#c4c4c4] pr-[10px] pl-2">
                  <Icon n="layout" /><button className="mr-auto ml-[9px]">Layout.1</button><X label="Layout.1" />
                </div>
                <div className="flex h-[23px] w-[146px] shrink-0 items-center rounded-t-[3px] border border-b-0 border-[#9c9c9c] bg-[#ececec] pr-[10px] pl-2">
                  <Icon n="schem" /><button className="mr-auto ml-[9px]">Schematic.3</button><X label="Schematic.3" />
                </div>
                <span className="mx-0.5 mb-[7px] h-[9px] flex-1 bg-[repeating-linear-gradient(#4b3b7c_0_1px,transparent_1px_2px)]" />
                <div className="flex h-full items-center gap-2 bg-[#ececec] px-[6px]">
                  <Icon n="restore" className="size-[15px]" /><Icon n="dockIn" className="size-[15px]" />
                </div>
              </div>
              <div className="min-h-0 flex-1 bg-black"><Schematic /></div>
            </section>

            <section className="flex w-[342px] shrink-0 flex-col border-l border-[#b9b9b9]">
              <div className="flex h-[17px] shrink-0 items-center pr-[5px] pl-[5px]">
                <Icon n="visual" className="size-[15px]" />
                <h2 className="ml-px">Visual Mode</h2>
                <span className="mx-2 h-[7px] flex-1 bg-[repeating-linear-gradient(#adadad_0_1px,transparent_1px_2px)]" />
                <svg viewBox="0 0 9 10" className="h-[10px] w-[9px]"><path d="M0 0l9 5-9 5z" fill={P} /></svg>
              </div>
              <div className="flex min-h-0 flex-1">
                <div className="flex min-w-0 flex-1 flex-col pt-0.5 pr-0.5 pb-[3px] pl-[6px]">
                  <div className="relative h-[23px] shrink-0">
                    <select aria-label="Visual mode" className="h-full w-full appearance-none rounded-[3px] border border-[#9c9c9c] bg-[#ececec] pl-[22px]">
                      <option>Imported Path Pins</option>
                    </select>
                    <span className="pointer-events-none absolute inset-0 flex items-center justify-between pr-1 pl-1"><Icon n="visual" className="size-[15px]" /><Tri /></span>
                  </div>
                  <div className="mt-1 flex h-[23px] shrink-0 items-center">
                    <button className="h-full w-[43px] rounded-[3px] border border-[#8a8af0] bg-[#5050cc] text-white">Apply</button>
                    <button className="ml-0.5 h-full w-[51px] rounded-[3px] border border-[#9c9c9c]">Reload</button>
                    <button aria-label="Help" className="mr-[10px] ml-auto"><Icon n="help" className="block size-[15px]" /></button>
                    <button aria-label="Options" className="mr-1"><Icon n="gear" className="block size-[15px]" /></button>
                  </div>
                  <div className="flex h-[10px] shrink-0 items-center pt-1">
                    <span className="h-px w-[13px] bg-[#bdbdbd]" /><span className="size-[6px] border border-[#bdbdbd]" /><span className="h-px flex-1 bg-[#bdbdbd]" />
                  </div>
                  <div className="min-h-0 flex-1 bg-black">
                    <label className="flex h-6 items-center text-white">
                      <input type="checkbox" defaultChecked className="peer sr-only" />
                      <span className="ml-[3px] flex size-[14px] items-center justify-center rounded-[3px] border border-[#555]">
                        <svg viewBox="0 0 10 10" className="size-[9px]"><path d="M1 5l3 4 4.500-8" fill="none" stroke="#fff" strokeWidth="2" /></svg>
                      </span>
                      <span className="ml-[3px] w-[42px]">path1</span>
                      <span className="h-5 w-5 border border-[#ff1493]" />
                      <span className="ml-[5px] w-5">98</span>
                      <span className="h-4 flex-1 bg-[#ff1493]" />
                    </label>
                    <label className="flex h-[22px] items-center text-[#7474e0]">
                      <input type="checkbox" className="peer sr-only" />
                      <span className="ml-[3px] size-[14px] rounded-[3px] border border-[#2c2c50]" />
                      <span className="ml-[3px] w-[42px]">path0</span>
                      <span className="h-5 w-5 border border-[#ff00ff]" />
                      <span className="ml-[5px]">98</span>
                    </label>
                  </div>
                </div>
                <div className="flex w-[30px] shrink-0 flex-col">
                  {SIDE_TABS.map((s, i) => (
                    <div
                      key={s.t}
                      className={`flex shrink-0 flex-col items-center rounded-r-[4px] border pt-[9px] pb-[10px] ${s.h} ${i === 4 ? 'w-[25px] border-[#8f8fc0] bg-[#bfbff2]' : 'w-6 border-b-0 border-[#9c9c9c] bg-[#c4c4c4]'}`}
                    >
                      <Icon n={s.n} className={s.n === 'tasks' || s.n === 'visual' ? 'size-[15px] rotate-0' : 'size-[15px]'} />
                      <button className="mt-[10px] mr-0.5 mb-auto [writing-mode:vertical-rl]">{s.t}</button>
                      <span className="mr-[5px] flex"><X label={s.t} /></span>
                    </div>
                  ))}
                  <span className="flex-1 border-l border-[#9c9c9c]" />
                </div>
              </div>
            </section>
          </div>

          <div className="flex h-8 shrink-0 items-start border-t border-[#b0b0b0] pt-px">
            <div className="flex w-[18px] flex-col items-center gap-1 pt-1">
              <svg viewBox="0 0 10 9" className="h-[9px] w-[10px]"><path d="M5 0l5 9H0z" fill={P} /></svg>
              <span className="h-3 w-[7px] bg-[repeating-linear-gradient(90deg,#a5a5a5_0_1px,transparent_1px_2px)]" />
            </div>
            <div className="flex h-[25px] w-[117px] items-center rounded-b-[3px] border border-t-0 border-[#9c9c9c] pr-[10px] pl-2">
              <Icon n="console" /><button className="mr-auto ml-2">Console</button><X label="Console" />
            </div>
            <div className="flex h-[24px] w-[145px] items-center rounded-b-[3px] border border-[#9c9c9c] bg-[#c4c4c4] pr-[10px] pl-2">
              <Icon n="edit" /><button className="mr-auto ml-[9px]">Script Editor</button><X label="Script Editor" />
            </div>
            <span className="h-px flex-1 bg-[#a2a2a2]" />
          </div>
        </div>
      </main>

      <div className="flex h-8 shrink-0 items-center border-b border-[#606060] pt-px pr-[5px] pl-[6px]">
        <Icon n="status" />
        <p className="ml-[5px]">Click objects or drag a box to select (Hold Ctrl to add, Shift to remove) Alt DoubleClick expands Fanin/Out ALL levels</p>
        <span className="ml-auto"><Icon n="net" className="block size-4" /></span>
        <span className="ml-[14px] h-3 border-l border-[#d0d0d0]" />
        <span className="ml-1">_a4_reg[9][31]/D{'}'}</span>
        <Icon n="queue" className="ml-[14px] size-4" />
      </div>

      <footer className="flex h-[37px] shrink-0 items-center bg-gradient-to-b from-[#ececec] to-[#dfdfdf] pr-[13px] pl-[5px] font-['Noto_Sans',sans-serif] text-xs text-[#2e3436]">
        <button aria-label="Show desktop" className="mr-[5px] flex h-[27px] w-[30px] shrink-0 items-center justify-center rounded-[3px] border border-[#bdbdbd] bg-[#efefef]">
          <svg viewBox="0 0 16 16" className="size-4"><path d="M8 2.500h6v6H8zM6 7H2v7h6v-3" fill="none" stroke="#2e3436" strokeWidth="2.400" /></svg>
        </button>
        <div className="flex gap-[5px]">
          {TASKS.map((t) => (
            <button key={t.t} className={`flex h-[31px] w-[263px] items-center gap-1 rounded-[3px] border border-[#bababa] pl-[6px] whitespace-nowrap ${t.on ? 'bg-[#cbcbcb]' : 'bg-[#efefef]'}`}>
              {t.i}
              <span>{t.t}</span>
            </button>
          ))}
        </div>
        <div className="ml-auto flex gap-1">
          <button aria-label="Workspace 1" className="h-[27px] w-[53px] rounded-l-[3px] border-2 border-[#878787] bg-[#f5f4f2]" />
          <button aria-label="Workspace 2" className="h-[27px] w-[53px] border border-[#cbcbcb] bg-[#dcdcdc]" />
          <button aria-label="Workspace 3" className="h-[27px] w-[53px] border border-[#cbcbcb] bg-[#dcdcdc]" />
          <button aria-label="Workspace 4" className="h-[27px] w-[53px] rounded-r-[3px] border border-[#cbcbcb] bg-[#dcdcdc]" />
        </div>
      </footer>
    </div>
  );
}
